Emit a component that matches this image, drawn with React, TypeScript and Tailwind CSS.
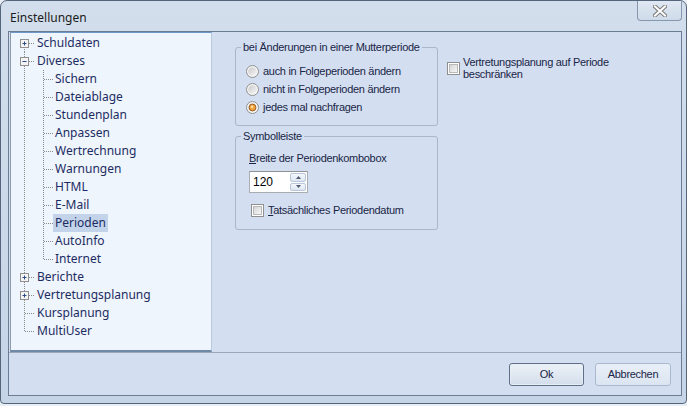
import type { ReactNode } from 'react'

type TreeItem = {
  label: string
  level: 0 | 1
  box?: 'plus' | 'minus'
  first?: boolean
  last?: boolean
  selected?: boolean
}

const treeItems: TreeItem[] = [
  { label: 'Schuldaten', level: 0, box: 'plus', first: true },
  { label: 'Diverses', level: 0, box: 'minus' },
  { label: 'Sichern', level: 1 },
  { label: 'Dateiablage', level: 1 },
  { label: 'Stundenplan', level: 1 },
  { label: 'Anpassen', level: 1 },
  { label: 'Wertrechnung', level: 1 },
  { label: 'Warnungen', level: 1 },
  { label: 'HTML', level: 1 },
  { label: 'E-Mail', level: 1 },
  { label: 'Perioden', level: 1, selected: true },
  { label: 'AutoInfo', level: 1 },
  { label: 'Internet', level: 1, last: true },
  { label: 'Berichte', level: 0, box: 'plus' },
  { label: 'Vertretungsplanung', level: 0, box: 'plus' },
  { label: 'Kursplanung', level: 0 },
  { label: 'MultiUser', level: 0, last: true },
]

const dotted = { stroke: '#8a8a8a', strokeWidth: 1, strokeDasharray: '1 1' }

// connector lines + expander box drawn to the left of each tree label
function TreeGlyph({ item }: { item: TreeItem }): ReactNode {
  if (item.level === 0) {
    return (
      <svg width="25" height="18" className="shrink-0">
        <line x1="13.5" y1={item.first ? 9 : 0} x2="13.5" y2={item.last ? 9 : 18} {...dotted} />
        <line x1="14" y1="9.5" x2="24" y2="9.5" {...dotted} />
        {item.box && (
          <g>
            <rect x="9.5" y="5.5" width="8" height="8" fill="#f4f4f4" stroke="#909090" />
            <line x1="11.5" y1="9.5" x2="15.5" y2="9.5" stroke="#2b4c87" />
            {item.box === 'plus' && <line x1="13.5" y1="7.5" x2="13.5" y2="11.5" stroke="#2b4c87" />}
          </g>
        )}
      </svg>
    )
  }
  return (
    <svg width="42" height="18" className="shrink-0">
      <line x1="13.5" y1="0" x2="13.5" y2="18" {...dotted} />
      <line x1="32.5" y1="0" x2="32.5" y2={item.last ? 9 : 18} {...dotted} />
      <line x1="33" y1="9.5" x2="42" y2="9.5" {...dotted} />
    </svg>
  )
}

function Radio({ checked }: { checked?: boolean }): ReactNode {
  return (
    <svg width="13" height="13" className="shrink-0">
      <defs>
        <linearGradient id={checked ? 'rg1' : 'rg0'} x1="0" y1="0" x2="1" y2="1">
          <stop offset="0" stopColor="#c9c9c9" />
          <stop offset="1" stopColor="#f7f7f7" />
        </linearGradient>
      </defs>
      <circle cx="6.5" cy="6.5" r="6" fill="#f5f5f5" stroke="#8e8f8f" />
      <circle cx="6.5" cy="6.5" r="4.3" fill={`url(#${checked ? 'rg1' : 'rg0'})`} />
      {checked && (
        <g>
          <circle cx="6.5" cy="6.5" r="3.4" fill="#f2a23a" stroke="#8a4a12" strokeWidth="0.8" />
          <circle cx="6" cy="5.8" r="1.4" fill="#ffd9a0" />
        </g>
      )}
    </svg>
  )
}

function Checkbox(): ReactNode {
  return (
    <span className="flex h-[13px] w-[13px] shrink-0 items-center justify-center border border-[#8f8f8f] bg-white">
      <span className="h-[9px] w-[9px] border border-[#b9b9b9] bg-gradient-to-br from-[#d6d6d6] to-[#f6f6f6]" />
    </span>
  )
}

function Group({ title, children, className }: { title: string; children: ReactNode; className?: string }): ReactNode {
  return (
    <fieldset className={`w-[203px] rounded-[3px] border border-[#a9b7c9] pl-[5px] ${className ?? ''}`}>
      <legend className="px-[2px] leading-[13px]">{title}</legend>
      {children}
    </fieldset>
  )
}

function CloseGlyph(): ReactNode {
  return (
    <svg width="14" height="12" viewBox="0 0 14 12">
      <path d="M2 1.5 L12 10.5 M12 1.5 L2 10.5" stroke="#7a7a7a" strokeWidth="4" strokeLinecap="square" />
      <path d="M2 1.5 L12 10.5 M12 1.5 L2 10.5" stroke="#ffffff" strokeWidth="2" strokeLinecap="square" />
    </svg>
  )
}

export default function App(): ReactNode {
  return (
    <div className="h-[406px] w-[687px] overflow-hidden bg-[#e8eef5]">
      <div className="flex h-[404px] flex-col rounded-t-[7px] rounded-b-[4px] border border-[#54657c] bg-gradient-to-b from-[#d2deec] via-[#cbd9ea] to-[#c5d4e7] pb-[7px] pl-[7px] pr-[4px]">
        {/* title bar */}
        <div className="flex h-[30px] shrink-0 items-start justify-between">
          <span className="ml-[2px] mt-[8px] font-['Noto_Sans',sans-serif] text-[12px] leading-[17px] text-[#1b1b1b]">
            Einstellungen
          </span>
          <button
            type="button"
            aria-label="Schließen"
            className="flex h-[20px] w-[45px] items-center justify-center rounded-b-[4px] border border-t-0 border-[#8797ad] bg-gradient-to-b from-[#dfe8f3] to-[#cfdbea]"
          >
            <CloseGlyph />
          </button>
        </div>

        {/* client area */}
        <div className="flex min-h-0 flex-1 flex-col border border-[#6c7c92] bg-[#d3dff0]">
          <div className="flex h-[321px] shrink-0 border-b border-[#9aa7b8]">
            <div className="ml-[1px] w-[202px] shrink-0 border-l border-t border-r border-l-[#8d9aab] border-t-[#6d98c8] border-r-[#b9c9dc] border-b-2 border-b-[#6f88a6] bg-[#eff5fc] pt-[1px] font-['Noto_Sans',sans-serif] text-[12px] text-[#1c2c63]">
              {treeItems.map((item) => (
                <div key={item.label} className="flex h-[18px] items-center">
                  <TreeGlyph item={item} />
                  <span
                    className={`px-[2px] leading-[18px] ${item.selected ? 'bg-[#c3d4ea]' : ''} ${item.level === 1 ? 'ml-[0px]' : 'ml-[-1px]'}`}
                  >
                    {item.label}
                  </span>
                </div>
              ))}
            </div>

            <div className="flex flex-1 items-start pl-[23px] pt-[9px] font-['Liberation_Sans',Arial,sans-serif] text-[11px] tracking-[-0.3px] text-[#1a2547]">
              <div className="flex flex-col">
                <Group title="bei Änderungen in einer Mutterperiode" className="pb-[9px]">
                  <div className="ml-[5px] mt-[8px] flex flex-col">
                    {[
                      { label: 'auch in Folgeperioden ändern' },
                      { label: 'nicht in Folgeperioden ändern' },
                      { label: 'jedes mal nachfragen', checked: true },
                    ].map((r) => (
                      <div key={r.label} className="flex h-[18px] items-center gap-[4px]">
                        <Radio checked={r.checked} />
                        <span>{r.label}</span>
                      </div>
                    ))}
                  </div>
                </Group>

                <Group title="Symbolleiste" className="mt-[4px] pb-[12px]">
                  <div className="ml-[8px] mt-[8px] flex flex-col">
                    <span className="leading-[14px]">
                      <span className="underline underline-offset-1">B</span>reite der Periodenkombobox
                    </span>
                    <div className="mt-[6px] flex h-[22px] w-[59px] items-center justify-between border border-[#abadb3] border-t-[#8f9297] bg-white pl-[3px] pr-[1px]">
                      <span className="text-[12px] tracking-normal text-black">120</span>
                      <div className="flex h-[18px] w-[16px] flex-col gap-[1px]">
                        <span className="flex flex-1 items-center justify-center rounded-[2px] border border-[#b8c7d9] bg-gradient-to-b from-[#f5f8fc] to-[#dde6f1]">
                          <svg width="5" height="3"><path d="M0 3 L2.5 0 L5 3 Z" fill="#4d5a70" /></svg>
                        </span>
                        <span className="flex flex-1 items-center justify-center rounded-[2px] border border-[#b8c7d9] bg-gradient-to-b from-[#f5f8fc] to-[#dde6f1]">
                          <svg width="5" height="3"><path d="M0 0 L2.5 3 L5 0 Z" fill="#4d5a70" /></svg>
                        </span>
                      </div>
                    </div>
                    <div className="ml-[2px] mt-[11px] flex h-[13px] items-center gap-[4px]">
                      <Checkbox />
                      <span>
                        <span className="underline underline-offset-1">T</span>atsächliches Periodendatum
                      </span>
                    </div>
                  </div>
                </Group>
              </div>

              <div className="ml-[9px] mt-[15px] flex items-center gap-[3px]">
                <Checkbox />
                <span className="leading-[12px]">
                  Vertretungsplanung auf Periode
                  <br />
                  beschränken
                </span>
              </div>
            </div>
          </div>

          {/* button bar */}
          <div className="flex flex-1 items-center justify-end gap-[11px] pr-[10px] font-['Liberation_Sans',Arial,sans-serif] text-[11px] tracking-[-0.3px] text-[#1a2547]">
            <button
              type="button"
              className="h-[23px] w-[75px] rounded-[3px] border border-[#5f6f88] bg-gradient-to-b from-[#edf2f8] to-[#d3deeb] shadow-[inset_0_0_0_1px_#e8eef6]"
            >
              Ok
            </button>
            <button
              type="button"
              className="h-[23px] w-[76px] rounded-[3px] border border-[#a9bad0] bg-gradient-to-b from-[#e9eff7] to-[#dbe5f1]"
            >
              Abbrechen
            </button>
          </div>
        </div>
      </div>
    </div>
  )
}
